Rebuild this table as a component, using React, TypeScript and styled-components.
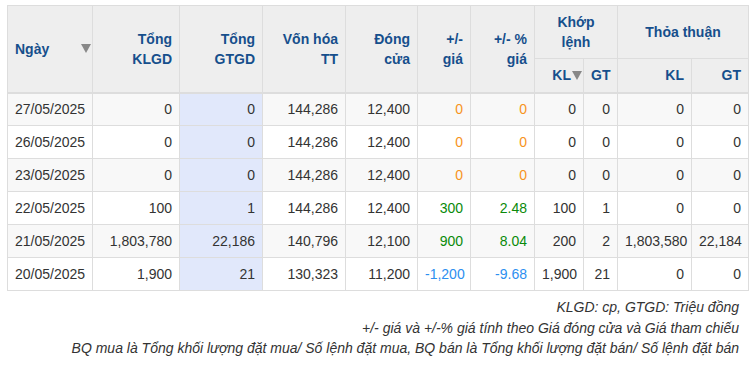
import React from "react";
import styled, { createGlobalStyle } from "styled-components";

const GlobalStyle = createGlobalStyle`
  body {
    margin: 0;
    background: #fff;
    font-family: Arial, "Liberation Sans", sans-serif;
    color: #333;
  }
`;

const Page = styled.div`
  width: 754px;
  padding: 5px 0 0 7px;
  box-sizing: border-box;
`;

const Table = styled.table`
  width: 741px;
  border-collapse: collapse;
  table-layout: fixed;
  border: 1px solid #ddd;
  font-size: 14px;
`;

const Th = styled.th<{ $align?: "left" | "right" | "center" }>`
  background: #eeeeee;
  color: #164f8c;
  font-weight: bold;
  font-size: 14px;
  line-height: 20px;
  border: 1px solid #ddd;
  text-align: ${(p) => p.$align || "right"};
  vertical-align: middle;
  padding: 0 7px;
`;

const HeadRow = styled.tr<{ $h: number; $last?: boolean }>`
  height: ${(p) => p.$h}px;
  ${(p) => (p.$last ? "border-bottom: 2px solid #ddd;" : "")}
`;

const SortHead = styled.div`
  display: flex;
  align-items: center;
  justify-content: space-between;
  margin-right: -6px;
`;

const Arrow = styled.span`
  width: 0;
  height: 0;
  border-left: 5px solid transparent;
  border-right: 5px solid transparent;
  border-top: 9px solid #888;
  display: inline-block;
`;

const InlineArrow = styled(Arrow)`
  margin-left: 1px;
  vertical-align: -1px;
`;

const SubKL = styled.div`
  display: flex;
  justify-content: flex-end;
  align-items: center;
  margin-right: -6px;
`;

const Row = styled.tr<{ $alt: boolean }>`
  height: 33px;
  background: ${(p) => (p.$alt ? "#f8f8f8" : "#fff")};
`;

type Tone = "plain" | "up" | "down" | "same";

const toneColor: Record<Tone, string> = {
  plain: "#333",
  up: "#0a8a0a",
  down: "#2d8ff0",
  same: "#f7941d",
};

const Td = styled.td<{ $tone?: Tone; $hl?: boolean; $align?: "left" | "right" }>`
  border: 1px solid #ddd;
  padding: 0 7px;
  text-align: ${(p) => p.$align || "right"};
  color: ${(p) => toneColor[p.$tone || "plain"]};
  white-space: nowrap;
  ${(p) => (p.$hl ? "background: #e1e8fb;" : "")}
`;

const Notes = styled.div`
  padding: 6px 15px 0 0;
  text-align: right;
  font-style: italic;
  font-size: 14px;
  line-height: 20.5px;
  color: #333;
`;

type RowData = {
  date: string;
  klgd: string;
  gtgd: string;
  von: string;
  close: string;
  chg: string;
  pct: string;
  tone: Tone;
  kl: string;
  gt: string;
  tkl: string;
  tgt: string;
};

const rows: RowData[] = [
  { date: "27/05/2025", klgd: "0", gtgd: "0", von: "144,286", close: "12,400", chg: "0", pct: "0", tone: "same", kl: "0", gt: "0", tkl: "0", tgt: "0" },
  { date: "26/05/2025", klgd: "0", gtgd: "0", von: "144,286", close: "12,400", chg: "0", pct: "0", tone: "same", kl: "0", gt: "0", tkl: "0", tgt: "0" },
  { date: "23/05/2025", klgd: "0", gtgd: "0", von: "144,286", close: "12,400", chg: "0", pct: "0", tone: "same", kl: "0", gt: "0", tkl: "0", tgt: "0" },
  { date: "22/05/2025", klgd: "100", gtgd: "1", von: "144,286", close: "12,400", chg: "300", pct: "2.48", tone: "up", kl: "100", gt: "1", tkl: "0", tgt: "0" },
  { date: "21/05/2025", klgd: "1,803,780", gtgd: "22,186", von: "140,796", close: "12,100", chg: "900", pct: "8.04", tone: "up", kl: "200", gt: "2", tkl: "1,803,580", tgt: "22,184" },
  { date: "20/05/2025", klgd: "1,900", gtgd: "21", von: "130,323", close: "11,200", chg: "-1,200", pct: "-9.68", tone: "down", kl: "1,900", gt: "21", tkl: "0", tgt: "0" },
];

const widths = [85, 87, 83, 83, 72, 53, 64, 49, 34, 74, 57];

export default function App() {
  return (
    <Page>
      <GlobalStyle />
      <Table>
        <colgroup>
          {widths.map((w, i) => (
            <col key={i} style={{ width: w }} />
          ))}
        </colgroup>
        <thead>
          <HeadRow $h={53}>
            <Th rowSpan={2} $align="left">
              <SortHead>
                <span>Ngày</span>
                <Arrow />
              </SortHead>
            </Th>
            <Th rowSpan={2}>Tổng<br />KLGD</Th>
            <Th rowSpan={2}>Tổng<br />GTGD</Th>
            <Th rowSpan={2}>Vốn hóa<br />TT</Th>
            <Th rowSpan={2}>Đóng<br />cửa</Th>
            <Th rowSpan={2}>+/-<br />giá</Th>
            <Th rowSpan={2}>+/- %<br />giá</Th>
            <Th colSpan={2} $align="center">Khớp<br />lệnh</Th>
            <Th colSpan={2} $align="center">Thỏa thuận</Th>
          </HeadRow>
          <HeadRow $h={34} $last>
            <Th>
              <SubKL>
                KL<InlineArrow />
              </SubKL>
            </Th>
            <Th>GT</Th>
            <Th>KL</Th>
            <Th>GT</Th>
          </HeadRow>
        </thead>
        <tbody>
          {rows.map((r, i) => (
            <Row key={r.date} $alt={i % 2 === 0}>
              <Td $align="left">{r.date}</Td>
              <Td>{r.klgd}</Td>
              <Td $hl>{r.gtgd}</Td>
              <Td>{r.von}</Td>
              <Td>{r.close}</Td>
              <Td $tone={r.tone}>{r.chg}</Td>
              <Td $tone={r.tone}>{r.pct}</Td>
              <Td>{r.kl}</Td>
              <Td>{r.gt}</Td>
              <Td>{r.tkl}</Td>
              <Td>{r.tgt}</Td>
            </Row>
          ))}
        </tbody>
      </Table>
      <Notes>
        <div>KLGD: cp, GTGD: Triệu đồng</div>
        <div>+/- giá và +/-% giá tính theo Giá đóng cửa và Giá tham chiếu</div>
        <div>BQ mua là Tổng khối lượng đặt mua/ Số lệnh đặt mua, BQ bán là Tổng khối lượng đặt bán/ Số lệnh đặt bán</div>
      </Notes>
    </Page>
  );
}
